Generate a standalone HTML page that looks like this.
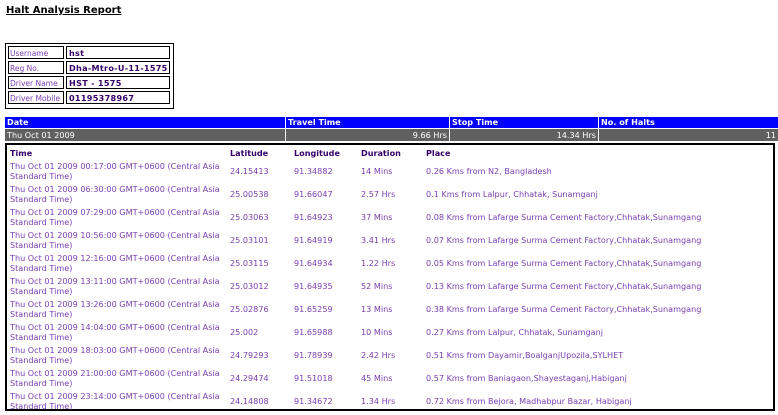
<!DOCTYPE html>
<html><head><style>
body{margin:0;width:778px;height:415px;background:#fff;font-family:"DejaVu Sans","Liberation Sans",sans-serif;font-size:8.1px;color:#7a3fb0;position:relative;overflow:hidden}
.a{position:absolute;white-space:nowrap}
h1{position:absolute;left:6px;top:5px;margin:0;font-size:10px;font-weight:bold;color:#000;text-decoration:underline}
.info{position:absolute;left:5px;top:43px;width:165px;height:62px;border:1px solid #000;padding:1px}
.info div{position:absolute;border:1px solid #000;height:13px;line-height:13px;padding-left:1px;box-sizing:border-box;white-space:nowrap;overflow:hidden;font-size:7.5px}
.b{font-weight:bold;color:#330066}
.info .b{letter-spacing:0.3px;font-size:8.1px;padding-left:2px}
.hd{position:absolute;top:117px;height:11px;background:#0000ff;color:#fff;font-weight:bold;line-height:11px;padding-left:2px;box-sizing:border-box}
.gr{position:absolute;top:129px;height:12px;background:#606060;color:#fff;line-height:12px;box-sizing:border-box;padding:0 2px}
.box{position:absolute;left:5px;top:143px;width:770px;height:268px;border:2px solid #000;box-sizing:border-box}
</style></head><body>
<h1>Halt Analysis Report</h1>
<div class="info">
<div style="left:2px;top:2px;width:56px">Username</div><div class="b" style="left:60px;top:2px;width:104px">hst</div>
<div style="left:2px;top:17px;width:56px">Reg No.</div><div class="b" style="left:60px;top:17px;width:104px">Dha-Mtro-U-11-1575</div>
<div style="left:2px;top:32px;width:56px">Driver Name</div><div class="b" style="left:60px;top:32px;width:104px">HST - 1575</div>
<div style="left:2px;top:47px;width:56px">Driver Mobile</div><div class="b" style="left:60px;top:47px;width:104px">01195378967</div>
</div>
<div class="hd" style="left:5px;width:280px">Date</div>
<div class="hd" style="left:286px;width:163px">Travel Time</div>
<div class="hd" style="left:450px;width:148px">Stop Time</div>
<div class="hd" style="left:599px;width:179px">No. of Halts</div>
<div class="gr" style="left:5px;width:280px">Thu Oct 01 2009</div>
<div class="gr" style="left:286px;width:163px;text-align:right">9.66 Hrs</div>
<div class="gr" style="left:450px;width:148px;text-align:right">14.34 Hrs</div>
<div class="gr" style="left:599px;width:179px;text-align:right">11</div>
<div class="box"></div>
<div class="a b" style="left:10px;top:148px">Time</div>
<div class="a b" style="left:230px;top:148px">Latitude</div>
<div class="a b" style="left:294px;top:148px">Longitude</div>
<div class="a b" style="left:361px;top:148px">Duration</div>
<div class="a b" style="left:426px;top:148px">Place</div>
<div id="rows"></div>
<script>
var d=[["00:17:00","24.15413","91.34882","14 Mins","0.26 Kms from N2, Bangladesh"],
["06:30:00","25.00538","91.66047","2.57 Hrs","0.1 Kms from Lalpur, Chhatak, Sunamganj"],
["07:29:00","25.03063","91.64923","37 Mins","0.08 Kms from Lafarge Surma Cement Factory,Chhatak,Sunamgang"],
["10:56:00","25.03101","91.64919","3.41 Hrs","0.07 Kms from Lafarge Surma Cement Factory,Chhatak,Sunamgang"],
["12:16:00","25.03115","91.64934","1.22 Hrs","0.05 Kms from Lafarge Surma Cement Factory,Chhatak,Sunamgang"],
["13:11:00","25.03012","91.64935","52 Mins","0.13 Kms from Lafarge Surma Cement Factory,Chhatak,Sunamgang"],
["13:26:00","25.02876","91.65259","13 Mins","0.38 Kms from Lafarge Surma Cement Factory,Chhatak,Sunamgang"],
["14:04:00","25.002","91.65988","10 Mins","0.27 Kms from Lalpur, Chhatak, Sunamganj"],
["18:03:00","24.79293","91.78939","2.42 Hrs","0.51 Kms from Dayamir,BoalganjUpozila,SYLHET"],
["21:00:00","24.29474","91.51018","45 Mins","0.57 Kms from Baniagaon,Shayestaganj,Habiganj"],
["23:14:00","24.14808","91.34672","1.34 Hrs","0.72 Kms from Bejora, Madhabpur Bazar, Habiganj"]];
var h="";d.forEach(function(r,i){var t=160.5+i*23.05;
h+='<div class="a" style="left:10px;top:'+t+'px;line-height:10px">Thu Oct 01 2009 '+r[0]+' GMT+0600 (Central Asia<br>Standard Time)</div>';
[[230,1],[294,2],[361,3],[426,4]].forEach(function(c){h+='<div class="a" style="left:'+c[0]+'px;top:'+(t+5)+'px;line-height:10px">'+r[c[1]]+'</div>';});});
document.getElementById("rows").innerHTML=h;
</script>
</body></html>
